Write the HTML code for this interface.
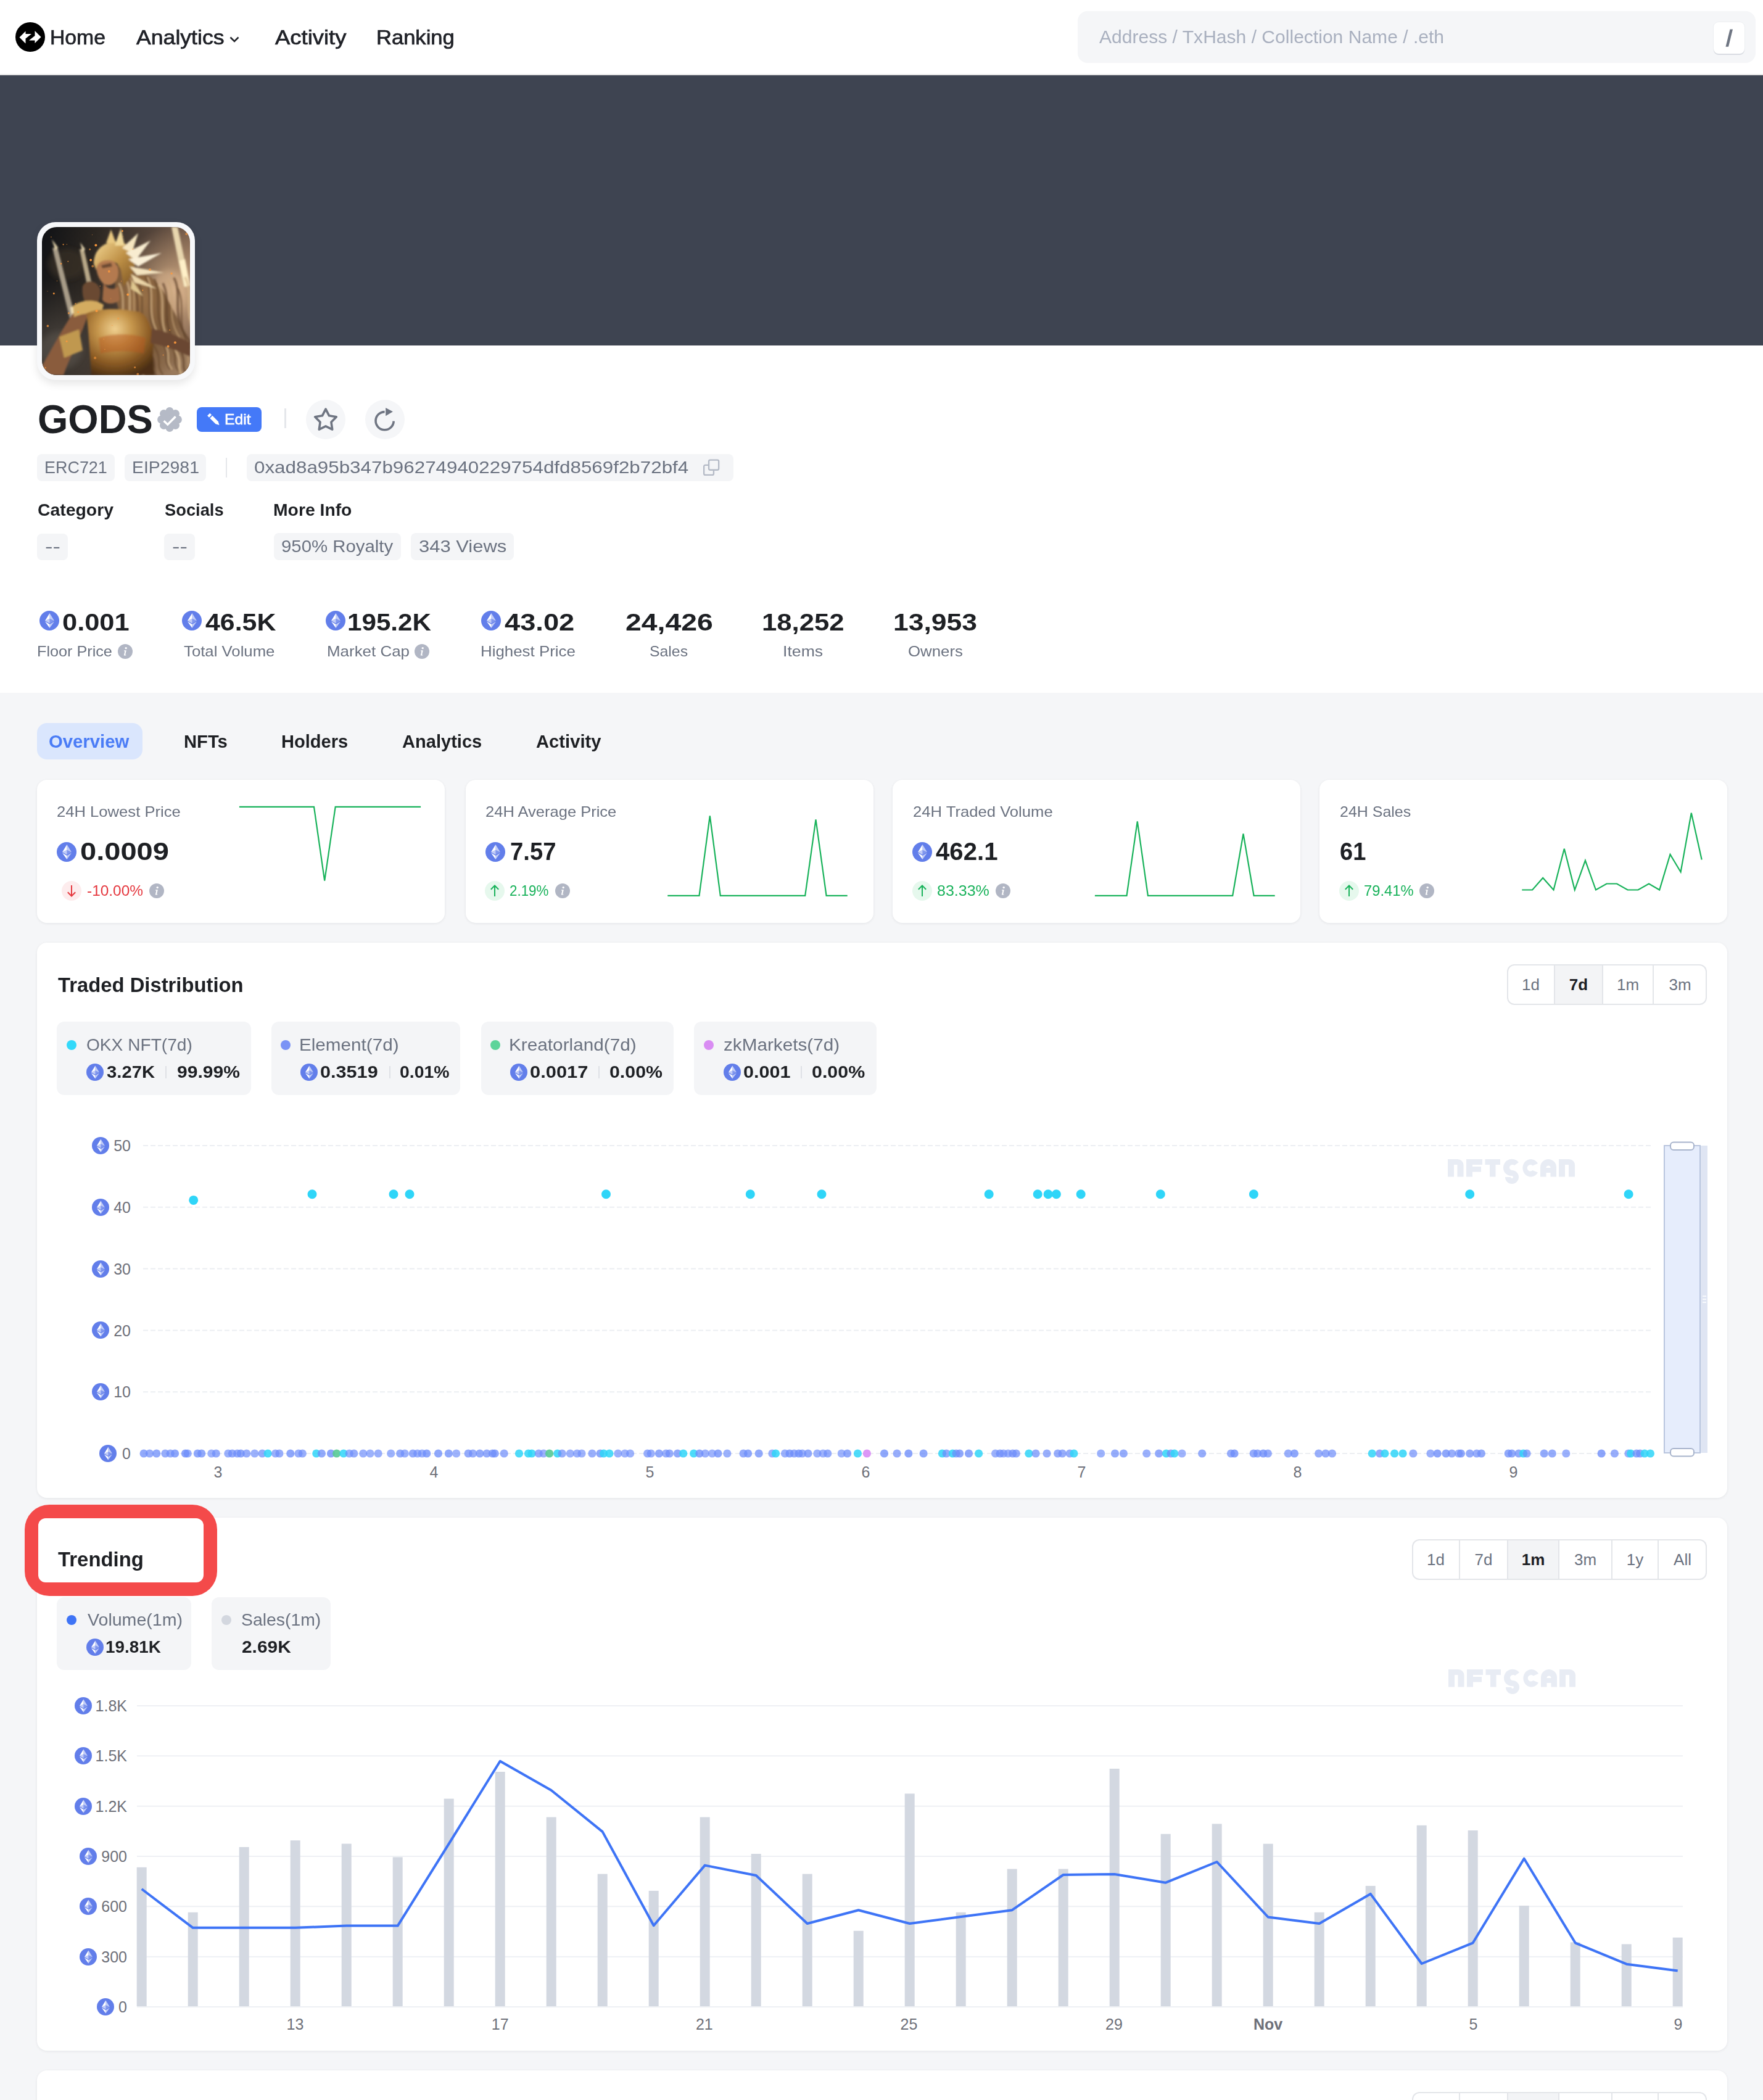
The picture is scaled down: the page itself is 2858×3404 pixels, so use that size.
<!DOCTYPE html>
<html><head><meta charset="utf-8">
<style>
html,body{margin:0;padding:0;}
body{width:2858px;height:3404px;overflow:hidden;background:#f5f6f8;position:relative;font-family:"Liberation Sans", sans-serif;}
.t{position:absolute;white-space:nowrap;}
.b{position:absolute;}
</style></head><body>
<svg width="0" height="0" style="position:absolute">
<defs>
<symbol id="eth" viewBox="0 0 32 32">
<circle cx="16" cy="16" r="16" fill="#627eea"/>
<g fill="#fff"><path fill-opacity=".602" d="M16.498 4v8.87l7.497 3.35z"/><path d="M16.498 4L9 16.22l7.498-3.35z"/><path fill-opacity=".602" d="M16.498 21.968v6.027L24 17.616z"/><path d="M16.498 27.995v-6.028L9 17.616z"/><path fill-opacity=".2" d="M16.498 20.573l7.497-4.353-7.497-3.348z"/><path fill-opacity=".602" d="M9 16.22l7.498 4.353v-7.701z"/></g>
</symbol>
<symbol id="info" viewBox="0 0 24 24">
<circle cx="12" cy="12" r="12" fill="#b1b6c4"/>
<circle cx="13.2" cy="6.6" r="1.7" fill="#fff"/>
<path d="M10.2 10.2h3.6l-1.7 7.2h1.4l-.3 1.2h-3.4l1.6-7.2h-1.4z" fill="#fff"/>
</symbol>
<symbol id="wm" overflow="visible"><g fill="#e8ecf4" fill-rule="evenodd">
<path d="M0 28.5V0H16A9.5 9.5 0 0 1 25.5 9.5V28.5H15.5V9H10V28.5Z"/>
<path d="M30 0H56V9H40V12H54V20.5H40V28.5H30Z"/>
<path d="M60.5 0H85V9H77.5V28.5H68V9H60.5Z"/>
<path d="M90 14a14 14 0 0 1 25 -9l-7 5a5 5 0 0 0 -8 3a5 5 0 0 0 4 5a11 11 0 0 1 11 11a11 11 0 0 1 -22 0h9a2 2 0 0 0 4 0a2 2 0 0 0 -2 -2a13 13 0 0 1 -14 -13z"/>
<path d="M146 7A13.25 14.25 0 1 0 146 21.5L137.5 18A5.2 5.2 0 1 1 137.5 10.5Z"/>
<path d="M150 28.5V13A13 13 0 0 1 176 13V28.5H166.5V22H159.5V28.5ZM159.5 14H166.5A3.5 3.5 0 0 0 159.5 14Z"/>
<path d="M180 28.5V0H196.5A9.5 9.5 0 0 1 206 9.5V28.5H196V9H190V28.5Z"/>
</g></symbol></defs></svg>

<div class="b" style="left:0.0px;top:0.0px;width:2858.0px;height:120.0px;background:#fff;border-radius:0px;"></div>
<div class="b" style="left:0.0px;top:120.0px;width:2858.0px;height:2.0px;background:#e4e4e4;border-radius:0px;"></div>
<svg class="b" style="left:25.0px;top:36.0px;" width="48" height="48" viewBox="0 0 48 48"><circle cx="24" cy="24" r="24" fill="#000"/><path fill="#fff" d="M6.5 24.5 L16.5 14.5 L16.5 19 L26 19 L16.5 26.5 L16.5 34.5 Z"/><path fill="#fff" d="M41.5 24 L31.5 34 L31.5 29.5 L22 29.5 L31.5 22 L31.5 14 Z"/></svg>
<div class="t" id="t0" style="left:81.3px;top:43.9px;font-size:33px;line-height:33px;font-weight:400;color:#202228;transform:scaleX(1.0221);transform-origin:0 0;-webkit-text-stroke:0.7px #202228;">Home</div>
<div class="t" id="t1" style="left:221.0px;top:43.9px;font-size:33px;line-height:33px;font-weight:400;color:#202228;transform:scaleX(1.0795);transform-origin:0 0;-webkit-text-stroke:0.7px #202228;">Analytics</div>
<svg class="b" style="left:371.0px;top:57.5px;" width="18" height="12" viewBox="0 0 18 12"><path d="M2.5 2.5 L9 9 L15.5 2.5" fill="none" stroke="#202228" stroke-width="2.6"/></svg>
<div class="t" id="t2" style="left:446.1px;top:43.9px;font-size:33px;line-height:33px;font-weight:400;color:#202228;transform:scaleX(1.1038);transform-origin:0 0;-webkit-text-stroke:0.7px #202228;">Activity</div>
<div class="t" id="t3" style="left:609.9px;top:43.9px;font-size:33px;line-height:33px;font-weight:400;color:#202228;transform:scaleX(1.0466);transform-origin:0 0;-webkit-text-stroke:0.7px #202228;">Ranking</div>
<div class="b" style="left:1747.0px;top:18.0px;width:1099.0px;height:84.0px;background:#f5f6f8;border-radius:16px;"></div>
<div class="t" id="t4" style="left:1782.0px;top:45.1px;font-size:30px;line-height:30px;font-weight:400;color:#a9b0bf;transform:scaleX(1.0018);transform-origin:0 0;">Address / TxHash / Collection Name / .eth</div>
<div class="b" style="left:2778.0px;top:36.0px;width:50.0px;height:51.0px;background:#fff;border-radius:8px;box-shadow:0 2px 0 #d9dce2, 0 0 0 1px #eceef1;"></div>
<svg class="b" style="left:2790.0px;top:40.0px;" width="30" height="40" viewBox="0 0 30 40"><path d="M7.5 35.7 L12 35.7 L19 7.5 L14.5 7.5 Z" fill="#6f7683"/></svg>
<div class="b" style="left:0.0px;top:122.0px;width:2858.0px;height:438.0px;background:#3e4451;border-radius:0px;"></div>
<div class="b" style="left:560.0px;top:560.0px;width:2298.0px;height:563.0px;background:#fff;border-radius:0px;"></div>
<div class="b" style="left:0.0px;top:560.0px;width:2858.0px;height:563.0px;background:#fff;border-radius:0px;"></div>
<div class="b" style="left:60.0px;top:360.0px;width:256.0px;height:256.0px;background:#f7f8fa;border-radius:30px;box-shadow:0 6px 14px rgba(0,0,0,0.10);"></div>
<svg class="b" style="left:68.0px;top:368.0px;" width="240" height="240" viewBox="0 0 240 240"><defs>
<linearGradient id="avbg" x1="0" y1="0" x2="1" y2="0.25"><stop offset="0" stop-color="#0f1115"/><stop offset="0.35" stop-color="#2b2621"/><stop offset="0.7" stop-color="#54443a"/><stop offset="1" stop-color="#806450"/></linearGradient>
<radialGradient id="avglow" cx="0.9" cy="0.42" r="0.42"><stop offset="0" stop-color="#f0c89a" stop-opacity="0.7"/><stop offset="1" stop-color="#e7b88a" stop-opacity="0"/></radialGradient>
<radialGradient id="avsmoke" cx="0.12" cy="0.8" r="0.45"><stop offset="0" stop-color="#4e4842" stop-opacity="0.95"/><stop offset="1" stop-color="#3a3530" stop-opacity="0"/></radialGradient>
<radialGradient id="hair" cx="0.35" cy="0.3" r="0.8"><stop offset="0" stop-color="#9a7248"/><stop offset="0.5" stop-color="#7a5838"/><stop offset="0.85" stop-color="#8a6a4c"/><stop offset="1" stop-color="#9a7a5c"/></radialGradient>
<linearGradient id="gold" x1="0" y1="0" x2="1" y2="1"><stop offset="0" stop-color="#f4d894"/><stop offset="0.5" stop-color="#c09248"/><stop offset="1" stop-color="#7a5220"/></linearGradient>
<radialGradient id="armor" cx="0.42" cy="0.3" r="0.75"><stop offset="0" stop-color="#f0d090"/><stop offset="0.35" stop-color="#c4944a"/><stop offset="0.7" stop-color="#8a5a24"/><stop offset="1" stop-color="#4b2f12"/></radialGradient>
<filter id="avblur" x="-10%" y="-10%" width="120%" height="120%"><feGaussianBlur stdDeviation="1.4"/></filter>
<filter id="avblur2" x="-20%" y="-20%" width="140%" height="140%"><feGaussianBlur stdDeviation="4"/></filter>
<clipPath id="avclip"><rect x="0" y="0" width="240" height="240" rx="24"/></clipPath>
</defs>
<g clip-path="url(#avclip)">
<rect width="240" height="240" fill="url(#avbg)"/>
<rect width="240" height="240" fill="url(#avglow)"/>
<rect width="240" height="240" fill="url(#avsmoke)"/>
<g filter="url(#avblur2)">
<ellipse cx="40" cy="60" rx="30" ry="25" fill="#3a3028" fill-opacity="0.6"/>
<ellipse cx="205" cy="110" rx="30" ry="40" fill="#e8c098" fill-opacity="0.35"/>
<ellipse cx="30" cy="200" rx="35" ry="30" fill="#57504a" fill-opacity="0.6"/>
</g>
<g filter="url(#avblur)">
<path d="M17 34 L25 33 L60 170 L51 172 Z" fill="#a89c88"/>
<path d="M46 130 L54 128 L62 168 L53 170 Z" fill="#f2e2b8"/>
<path d="M16 20 L22 38 L26 33 Z" fill="#e0d0a8"/>
<path d="M61 36 L68 35 L86 115 L78 117 Z" fill="#b8a888"/>
<path d="M62 25 L66 40 L70 36 Z" fill="#e8d8b0"/>
<path d="M210 0 L220 0 L240 95 L230 97 Z" fill="#e8d6ae"/>
<path d="M222 55 L232 52 L240 95 L232 97 Z" fill="#fff0c8"/>
<path d="M120 62 C150 60 185 80 200 110 C215 140 232 170 240 190 L240 240 L185 240 C175 215 160 200 150 180 C135 160 125 140 118 110 Z" fill="url(#hair)"/>
<path d="M125 91 C140 121 120 151 145 186 S150 221 165 241" fill="none" stroke="#d8b88a" stroke-width="2.9" stroke-opacity="0.7"/><path d="M136 84 C151 114 131 144 156 179 S161 214 176 234" fill="none" stroke="#d8b88a" stroke-width="3.3" stroke-opacity="0.7"/><path d="M143 82 C158 112 138 142 163 177 S168 212 183 232" fill="none" stroke="#c8a478" stroke-width="2.3" stroke-opacity="0.7"/><path d="M149 98 C164 128 144 158 169 193 S174 228 189 248" fill="none" stroke="#5e4028" stroke-width="3.2" stroke-opacity="0.7"/><path d="M156 89 C171 119 151 149 176 184 S181 219 196 239" fill="none" stroke="#6a4a2e" stroke-width="3.2" stroke-opacity="0.7"/><path d="M168 81 C183 111 163 141 188 176 S193 211 208 231" fill="none" stroke="#5e4028" stroke-width="2.4" stroke-opacity="0.7"/><path d="M171 81 C186 111 166 141 191 176 S196 211 211 231" fill="none" stroke="#d8b88a" stroke-width="2.7" stroke-opacity="0.7"/><path d="M182 84 C197 114 177 144 202 179 S207 214 222 234" fill="none" stroke="#6a4a2e" stroke-width="3.3" stroke-opacity="0.7"/><path d="M189 93 C204 123 184 153 209 188 S214 223 229 243" fill="none" stroke="#d8b88a" stroke-width="3.3" stroke-opacity="0.7"/><path d="M196 91 C211 121 191 151 216 186 S221 221 236 241" fill="none" stroke="#5e4028" stroke-width="3.4" stroke-opacity="0.7"/><path d="M204 85 C219 115 199 145 224 180 S229 215 244 235" fill="none" stroke="#c8a478" stroke-width="2.1" stroke-opacity="0.7"/><path d="M214 82 C229 112 209 142 234 177 S239 212 254 232" fill="none" stroke="#5e4028" stroke-width="3.7" stroke-opacity="0.7"/><path d="M220 99 C235 129 215 159 240 194 S245 229 260 249" fill="none" stroke="#5e4028" stroke-width="2.4" stroke-opacity="0.7"/><path d="M232 81 C247 111 227 141 252 176 S257 211 272 231" fill="none" stroke="#d8b88a" stroke-width="4.0" stroke-opacity="0.7"/><path d="M66 96 C72 84 88 86 94 100 C96 115 90 128 80 132 C70 128 64 112 66 96 Z" fill="#6a4a30"/>
<path d="M0 240 L0 225 C15 200 30 170 50 140 L75 140 C65 175 45 210 35 240 Z" fill="#8a5c3c"/>
<path d="M28 178 L60 166 L66 200 L36 212 Z" fill="#c09850"/>
<path d="M50 128 C62 118 86 116 100 126 L96 142 C80 138 64 140 52 146 Z" fill="#d4ac60"/>
<path d="M72 140 C95 130 130 132 160 138 C178 150 182 180 180 210 L182 240 L80 240 C78 210 76 170 72 140 Z" fill="url(#armor)"/>
<path d="M92 180 C110 172 150 172 168 180 L165 205 C145 200 115 200 95 205 Z" fill="#b8561e" fill-opacity="0.45"/>
<path d="M178 165 C200 168 225 178 240 188 L240 210 C220 200 198 192 176 188 Z" fill="#6a4630"/>
<path d="M100 90 C104 100 116 104 124 96 L126 118 C118 126 104 126 98 118 Z" fill="#a06a44"/>
<path d="M88 52 C86 66 90 84 100 92 C110 98 120 92 123 80 C126 66 120 56 110 50 Z" fill="#b47a50"/><path d="M96 62 L112 58 L114 64 L98 67 Z" fill="#6a4830"/>
<path d="M84 60 C84 34 104 22 126 24 C146 28 154 44 150 66 C146 80 138 90 132 96 L128 70 C124 56 110 50 96 56 C90 60 88 64 88 70 Z" fill="url(#gold)"/>
<path d="M104 26 L112 4 L120 26 Z" fill="#e8c880"/>
<path d="M118 30 L128 2 L134 30 Z" fill="#f0d898"/>
<path d="M130 34 L156 10 L146 42 Z" fill="#f6e6c0"/>
<path d="M136 42 L176 22 L152 54 Z" fill="#f8ecd0"/>
<path d="M140 52 L194 42 L156 64 Z" fill="#faf0d8"/>
<path d="M142 64 L198 74 L154 78 Z" fill="#f4e4c0"/>
<path d="M144 76 L186 100 L150 90 Z" fill="#ecd6a8"/>
<path d="M146 86 L164 112 L144 100 Z" fill="#e0c890"/>
</g>
<circle cx="77.7" cy="36.2" r="1.6" fill="#ff9a3c" fill-opacity="0.53"/><circle cx="128.6" cy="87.8" r="0.7" fill="#ff9a3c" fill-opacity="0.73"/><circle cx="9.0" cy="104.1" r="0.7" fill="#ff9a3c" fill-opacity="0.54"/><circle cx="101.9" cy="198.4" r="0.8" fill="#ff9a3c" fill-opacity="0.60"/><circle cx="150.6" cy="227.5" r="1.5" fill="#ff9a3c" fill-opacity="0.68"/><circle cx="234.3" cy="11.2" r="2.0" fill="#ff9a3c" fill-opacity="0.63"/><circle cx="34.6" cy="28.3" r="1.1" fill="#ff9a3c" fill-opacity="0.87"/><circle cx="43.4" cy="139.6" r="1.6" fill="#ff9a3c" fill-opacity="0.67"/><circle cx="131.5" cy="15.1" r="0.7" fill="#ff9a3c" fill-opacity="0.59"/><circle cx="163.3" cy="102.6" r="1.1" fill="#ff9a3c" fill-opacity="0.76"/><circle cx="108.8" cy="71.9" r="1.9" fill="#ff9a3c" fill-opacity="0.81"/><circle cx="58.6" cy="137.9" r="1.4" fill="#ff9a3c" fill-opacity="0.89"/><circle cx="175.1" cy="69.1" r="2.2" fill="#ff9a3c" fill-opacity="0.55"/><circle cx="100.3" cy="181.7" r="0.8" fill="#ff9a3c" fill-opacity="0.72"/><circle cx="9.4" cy="160.4" r="1.8" fill="#ff9a3c" fill-opacity="0.76"/><circle cx="210.1" cy="75.3" r="1.7" fill="#ff9a3c" fill-opacity="0.77"/><circle cx="139.2" cy="109.5" r="1.9" fill="#ff9a3c" fill-opacity="0.93"/><circle cx="113.8" cy="159.4" r="0.7" fill="#ff9a3c" fill-opacity="0.82"/><circle cx="155.3" cy="238.3" r="1.9" fill="#ff9a3c" fill-opacity="0.63"/><circle cx="92.6" cy="160.5" r="0.6" fill="#ff9a3c" fill-opacity="0.71"/><circle cx="40.3" cy="28.1" r="0.7" fill="#ff9a3c" fill-opacity="0.85"/><circle cx="31.0" cy="59.4" r="1.2" fill="#ff9a3c" fill-opacity="0.89"/><circle cx="19.3" cy="107.8" r="1.5" fill="#ff9a3c" fill-opacity="0.90"/><circle cx="196.6" cy="207.4" r="1.0" fill="#ff9a3c" fill-opacity="0.69"/><circle cx="86.1" cy="212.2" r="2.1" fill="#ff9a3c" fill-opacity="0.57"/><circle cx="42.3" cy="55.7" r="1.0" fill="#ff9a3c" fill-opacity="0.72"/><circle cx="141.4" cy="63.1" r="0.6" fill="#ff9a3c" fill-opacity="0.69"/><circle cx="88.6" cy="135.9" r="2.1" fill="#ff9a3c" fill-opacity="0.81"/><circle cx="123.7" cy="148.2" r="1.7" fill="#ff9a3c" fill-opacity="0.52"/><circle cx="215.9" cy="187.2" r="2.0" fill="#ff9a3c" fill-opacity="0.86"/><circle cx="94.2" cy="95.8" r="0.8" fill="#ff9a3c" fill-opacity="0.79"/><circle cx="14.9" cy="16.2" r="0.9" fill="#ff9a3c" fill-opacity="0.57"/><circle cx="81.6" cy="12.6" r="0.6" fill="#ff9a3c" fill-opacity="0.57"/><circle cx="24.4" cy="87.3" r="0.6" fill="#ff9a3c" fill-opacity="0.89"/><circle cx="147.4" cy="35.7" r="1.0" fill="#ff9a3c" fill-opacity="0.66"/><circle cx="87.4" cy="29.5" r="2.0" fill="#ff9a3c" fill-opacity="0.95"/><circle cx="111.8" cy="116.1" r="0.7" fill="#ff9a3c" fill-opacity="0.55"/><circle cx="82.2" cy="63.5" r="1.9" fill="#ff9a3c" fill-opacity="0.57"/><circle cx="5.5" cy="228.2" r="1.4" fill="#ff9a3c" fill-opacity="0.57"/><circle cx="130.4" cy="6.5" r="1.4" fill="#ff9a3c" fill-opacity="0.94"/><circle cx="207.2" cy="167.1" r="1.0" fill="#ff9a3c" fill-opacity="0.67"/><circle cx="40.1" cy="185.3" r="1.5" fill="#ff9a3c" fill-opacity="0.85"/><circle cx="79.1" cy="53.5" r="1.9" fill="#ff9a3c" fill-opacity="0.94"/><circle cx="204.6" cy="193.5" r="1.9" fill="#ff9a3c" fill-opacity="0.83"/><circle cx="54.4" cy="124.2" r="1.2" fill="#ff9a3c" fill-opacity="0.51"/>
</g></svg>
<div class="t" id="t5" style="left:60.7px;top:647.8px;font-size:64px;line-height:64px;font-weight:700;color:#1e2024;transform:scaleX(0.9908);transform-origin:0 0;">GODS</div>
<svg class="b" style="left:255.0px;top:660.0px;" width="40" height="40" viewBox="0 0 40 40"><circle cx="20" cy="20" r="14.5" fill="#b5bac6"/><circle cx="33.30" cy="20.00" r="6.6" fill="#b5bac6"/><circle cx="29.40" cy="29.40" r="6.6" fill="#b5bac6"/><circle cx="20.00" cy="33.30" r="6.6" fill="#b5bac6"/><circle cx="10.60" cy="29.40" r="6.6" fill="#b5bac6"/><circle cx="6.70" cy="20.00" r="6.6" fill="#b5bac6"/><circle cx="10.60" cy="10.60" r="6.6" fill="#b5bac6"/><circle cx="20.00" cy="6.70" r="6.6" fill="#b5bac6"/><circle cx="29.40" cy="10.60" r="6.6" fill="#b5bac6"/><path d="M10.6 22.3 L16.8 28.2 L29.6 15.2" fill="none" stroke="#fff" stroke-width="3.4"/></svg>
<div class="b" style="left:319.0px;top:660.0px;width:105.0px;height:40.0px;background:#4479f8;border-radius:8px;"></div>
<svg class="b" style="left:330.0px;top:666.0px;" width="30" height="30" viewBox="0 0 30 30"><g transform="translate(8.2,5.8) rotate(45)"><rect x="0" y="-2.9" width="4" height="5.8" fill="#fff"/><path d="M5.8 -2.9 H19 L24.5 0 L19 2.9 H5.8 Z" fill="#fff"/></g></svg>
<div class="t" id="t6" style="left:363.9px;top:667.6px;font-size:24.5px;line-height:24.5px;font-weight:400;color:#fff;transform:scaleX(1.0071);transform-origin:0 0;-webkit-text-stroke:0.6px #fff;">Edit</div>
<div class="b" style="left:460.5px;top:662.0px;width:3.0px;height:32.0px;background:#e5e7eb;border-radius:0px;"></div>
<div class="b" style="left:496.0px;top:648.0px;width:64.0px;height:64.0px;background:#f5f6f8;border-radius:32px;"></div>
<svg class="b" style="left:496.0px;top:648.0px;" width="64" height="64" viewBox="0 0 64 64"><path d="M32.00 15.20 L37.53 25.80 L49.31 27.78 L40.94 36.30 L42.70 48.12 L32.00 42.80 L21.30 48.12 L23.06 36.30 L14.69 27.78 L26.47 25.80 Z" fill="none" stroke="#6f7582" stroke-width="3.6" stroke-linejoin="round"/></svg>
<div class="b" style="left:592.0px;top:648.0px;width:64.0px;height:64.0px;background:#f5f6f8;border-radius:32px;"></div>
<svg class="b" style="left:592.0px;top:648.0px;" width="64" height="64" viewBox="0 0 64 64"><path d="M31.6 19.6 A14.6 14.6 0 1 0 46.2 34.6" fill="none" stroke="#6f7582" stroke-width="3.6"/><path d="M33.2 12.9 L33.2 26.2 L44.9 19.3 Z" fill="#6f7582"/></svg>
<div class="b" style="left:60.0px;top:736.0px;width:126.0px;height:44.0px;background:#f4f5f7;border-radius:8px;"></div>
<div class="t" id="t7" style="left:72.0px;top:744.3px;font-size:28px;line-height:28px;font-weight:400;color:#6b7280;transform:scaleX(0.9621);transform-origin:0 0;">ERC721</div>
<div class="b" style="left:202.0px;top:736.0px;width:132.0px;height:44.0px;background:#f4f5f7;border-radius:8px;"></div>
<div class="t" id="t8" style="left:213.6px;top:744.3px;font-size:28px;line-height:28px;font-weight:400;color:#6b7280;transform:scaleX(1.0144);transform-origin:0 0;">EIP2981</div>
<div class="b" style="left:366.0px;top:742.0px;width:2.0px;height:32.0px;background:#e5e7eb;border-radius:0px;"></div>
<div class="b" style="left:400.0px;top:736.0px;width:789.0px;height:44.0px;background:#f4f5f7;border-radius:8px;"></div>
<div class="t" id="t9" style="left:411.9px;top:744.3px;font-size:28px;line-height:28px;font-weight:400;color:#6b7280;transform:scaleX(1.1194);transform-origin:0 0;">0xad8a95b347b96274940229754dfd8569f2b72bf4</div>
<svg class="b" style="left:1138.0px;top:742.0px;" width="32" height="32" viewBox="0 0 32 32"><rect x="11.05" y="3.65" width="16.1" height="16.1" rx="2.2" fill="none" stroke="#b4bac6" stroke-width="2.3"/><path d="M11.05 11.85 H5.35 A2.2 2.2 0 0 0 3.15 14.05 V25.65 A2.2 2.2 0 0 0 5.35 27.85 H16.75 A2.2 2.2 0 0 0 18.95 25.65 V19.75" fill="none" stroke="#b4bac6" stroke-width="2.3"/></svg>
<div class="t" id="t10" style="left:61.3px;top:812.8px;font-size:28px;line-height:28px;font-weight:700;color:#1e2024;transform:scaleX(1.0139);transform-origin:0 0;">Category</div>
<div class="t" id="t11" style="left:267.4px;top:812.8px;font-size:28px;line-height:28px;font-weight:700;color:#1e2024;transform:scaleX(0.9755);transform-origin:0 0;">Socials</div>
<div class="t" id="t12" style="left:443.2px;top:812.8px;font-size:28px;line-height:28px;font-weight:700;color:#1e2024;transform:scaleX(1.0112);transform-origin:0 0;">More Info</div>
<div class="b" style="left:60.0px;top:864.5px;width:50.0px;height:43.0px;background:#f4f5f7;border-radius:8px;"></div>
<div class="t" id="t13" style="left:72.5px;top:872.3px;font-size:28px;line-height:28px;font-weight:400;color:#6b7280;transform:scaleX(1.3353);transform-origin:0 0;">--</div>
<div class="b" style="left:266.0px;top:864.5px;width:50.0px;height:43.0px;background:#f4f5f7;border-radius:8px;"></div>
<div class="t" id="t14" style="left:278.5px;top:872.3px;font-size:28px;line-height:28px;font-weight:400;color:#6b7280;transform:scaleX(1.3353);transform-origin:0 0;">--</div>
<div class="b" style="left:444.0px;top:864.0px;width:206.0px;height:43.5px;background:#f4f5f7;border-radius:8px;"></div>
<div class="t" id="t15" style="left:455.6px;top:872.3px;font-size:28px;line-height:28px;font-weight:400;color:#6b7280;transform:scaleX(1.0488);transform-origin:0 0;">950% Royalty</div>
<div class="b" style="left:666.0px;top:864.0px;width:166.5px;height:43.5px;background:#f4f5f7;border-radius:8px;"></div>
<div class="t" id="t16" style="left:678.9px;top:872.3px;font-size:28px;line-height:28px;font-weight:400;color:#6b7280;transform:scaleX(1.1055);transform-origin:0 0;">343 Views</div>
<svg class="b" style="left:64.0px;top:990.0px;" width="32" height="32" viewBox="0 0 32 32"><use href="#eth"/></svg>
<div class="t" id="t17" style="left:101.0px;top:988.5px;font-size:39px;line-height:39px;font-weight:700;color:#1e2024;transform:scaleX(1.1134);transform-origin:0 0;">0.001</div>
<div class="t" id="t18" style="left:59.9px;top:1043.7px;font-size:24px;line-height:24px;font-weight:400;color:#6b7280;transform:scaleX(1.0504);transform-origin:0 0;">Floor Price</div>
<svg class="b" style="left:191.0px;top:1044.0px;" width="24" height="24" viewBox="0 0 24 24"><use href="#info"/></svg>
<svg class="b" style="left:295.0px;top:990.0px;" width="32" height="32" viewBox="0 0 32 32"><use href="#eth"/></svg>
<div class="t" id="t19" style="left:332.7px;top:988.5px;font-size:39px;line-height:39px;font-weight:700;color:#1e2024;transform:scaleX(1.0990);transform-origin:0 0;">46.5K</div>
<div class="t" id="t20" style="left:298.0px;top:1043.7px;font-size:24px;line-height:24px;font-weight:400;color:#6b7280;transform:scaleX(1.0730);transform-origin:0 0;">Total Volume</div>
<svg class="b" style="left:527.5px;top:990.0px;" width="32" height="32" viewBox="0 0 32 32"><use href="#eth"/></svg>
<div class="t" id="t21" style="left:562.8px;top:988.5px;font-size:39px;line-height:39px;font-weight:700;color:#1e2024;transform:scaleX(1.0806);transform-origin:0 0;">195.2K</div>
<div class="t" id="t22" style="left:530.0px;top:1043.7px;font-size:24px;line-height:24px;font-weight:400;color:#6b7280;transform:scaleX(1.0803);transform-origin:0 0;">Market Cap</div>
<svg class="b" style="left:672.0px;top:1044.0px;" width="24" height="24" viewBox="0 0 24 24"><use href="#info"/></svg>
<svg class="b" style="left:780.0px;top:990.0px;" width="32" height="32" viewBox="0 0 32 32"><use href="#eth"/></svg>
<div class="t" id="t23" style="left:818.0px;top:988.5px;font-size:39px;line-height:39px;font-weight:700;color:#1e2024;transform:scaleX(1.1608);transform-origin:0 0;">43.02</div>
<div class="t" id="t24" style="left:778.9px;top:1043.7px;font-size:24px;line-height:24px;font-weight:400;color:#6b7280;transform:scaleX(1.0780);transform-origin:0 0;">Highest Price</div>
<div class="t" id="t25" style="left:1013.8px;top:988.5px;font-size:39px;line-height:39px;font-weight:700;color:#1e2024;transform:scaleX(1.1880);transform-origin:0 0;">24,426</div>
<div class="t" id="t26" style="left:1053.0px;top:1043.7px;font-size:24px;line-height:24px;font-weight:400;color:#6b7280;transform:scaleX(1.0339);transform-origin:0 0;">Sales</div>
<div class="t" id="t27" style="left:1234.8px;top:988.5px;font-size:39px;line-height:39px;font-weight:700;color:#1e2024;transform:scaleX(1.1197);transform-origin:0 0;">18,252</div>
<div class="t" id="t28" style="left:1268.6px;top:1043.7px;font-size:24px;line-height:24px;font-weight:400;color:#6b7280;transform:scaleX(1.1107);transform-origin:0 0;">Items</div>
<div class="t" id="t29" style="left:1447.7px;top:988.5px;font-size:39px;line-height:39px;font-weight:700;color:#1e2024;transform:scaleX(1.1410);transform-origin:0 0;">13,953</div>
<div class="t" id="t30" style="left:1471.8px;top:1043.7px;font-size:24px;line-height:24px;font-weight:400;color:#6b7280;transform:scaleX(1.0756);transform-origin:0 0;">Owners</div>
<div class="b" style="left:60.0px;top:1172.0px;width:170.5px;height:59.0px;background:#dae6fd;border-radius:16px;"></div>
<div class="t" id="t31" style="left:79.4px;top:1187.9px;font-size:29px;line-height:29px;font-weight:700;color:#4a7cf6;transform:scaleX(1.0102);transform-origin:0 0;">Overview</div>
<div class="t" id="t32" style="left:298.0px;top:1187.9px;font-size:29px;line-height:29px;font-weight:700;color:#1e2024;transform:scaleX(1.0074);transform-origin:0 0;">NFTs</div>
<div class="t" id="t33" style="left:455.8px;top:1187.9px;font-size:29px;line-height:29px;font-weight:700;color:#1e2024;transform:scaleX(1.0019);transform-origin:0 0;">Holders</div>
<div class="t" id="t34" style="left:651.9px;top:1187.9px;font-size:29px;line-height:29px;font-weight:700;color:#1e2024;transform:scaleX(1.0023);transform-origin:0 0;">Analytics</div>
<div class="t" id="t35" style="left:869.0px;top:1187.9px;font-size:29px;line-height:29px;font-weight:700;color:#1e2024;transform:scaleX(1.0067);transform-origin:0 0;">Activity</div>
<div class="b" style="left:60.0px;top:1264.0px;width:661.0px;height:232.0px;background:#fff;border-radius:16px;box-shadow:0 1px 4px rgba(16,24,40,0.08);"></div>
<div class="t" id="t36" style="left:92.3px;top:1303.5px;font-size:24px;line-height:24px;font-weight:400;color:#6b7280;transform:scaleX(1.0674);transform-origin:0 0;">24H Lowest Price</div>
<svg class="b" style="left:92.0px;top:1365.0px;" width="32" height="32" viewBox="0 0 32 32"><use href="#eth"/></svg>
<div class="t" id="t37" style="left:129.7px;top:1360.1px;font-size:40px;line-height:40px;font-weight:700;color:#1e2024;transform:scaleX(1.1760);transform-origin:0 0;">0.0009</div>
<svg class="b" style="left:100.0px;top:1428.0px;" width="32" height="32" viewBox="0 0 32 32"><circle cx="16" cy="16" r="16" fill="#fdeced"/><path d="M16 7v17.5M9.8 18.3l6.2 6.2 6.2-6.2" fill="none" stroke="#e5383f" stroke-width="2"/></svg>
<div class="t" id="t38" style="left:141.0px;top:1432.0px;font-size:24px;line-height:24px;font-weight:400;color:#e5383f;transform:scaleX(1.0180);transform-origin:0 0;">-10.00%</div>
<div class="b" style="left:755.0px;top:1264.0px;width:661.0px;height:232.0px;background:#fff;border-radius:16px;box-shadow:0 1px 4px rgba(16,24,40,0.08);"></div>
<div class="t" id="t39" style="left:786.6px;top:1303.5px;font-size:24px;line-height:24px;font-weight:400;color:#6b7280;transform:scaleX(1.0633);transform-origin:0 0;">24H Average Price</div>
<svg class="b" style="left:787.0px;top:1365.0px;" width="32" height="32" viewBox="0 0 32 32"><use href="#eth"/></svg>
<div class="t" id="t40" style="left:826.8px;top:1360.1px;font-size:40px;line-height:40px;font-weight:700;color:#1e2024;transform:scaleX(0.9568);transform-origin:0 0;">7.57</div>
<svg class="b" style="left:786.0px;top:1428.0px;" width="32" height="32" viewBox="0 0 32 32"><circle cx="16" cy="16" r="16" fill="#e6f8ed"/><path d="M16 25v-17.5M9.8 13.7l6.2-6.2 6.2 6.2" fill="none" stroke="#18b25a" stroke-width="2"/></svg>
<div class="t" id="t41" style="left:826.4px;top:1432.0px;font-size:24px;line-height:24px;font-weight:400;color:#18b25a;transform:scaleX(0.9309);transform-origin:0 0;">2.19%</div>
<div class="b" style="left:1447.0px;top:1264.0px;width:661.0px;height:232.0px;background:#fff;border-radius:16px;box-shadow:0 1px 4px rgba(16,24,40,0.08);"></div>
<div class="t" id="t42" style="left:1479.6px;top:1303.5px;font-size:24px;line-height:24px;font-weight:400;color:#6b7280;transform:scaleX(1.0687);transform-origin:0 0;">24H Traded Volume</div>
<svg class="b" style="left:1479.0px;top:1365.0px;" width="32" height="32" viewBox="0 0 32 32"><use href="#eth"/></svg>
<div class="t" id="t43" style="left:1516.6px;top:1360.1px;font-size:40px;line-height:40px;font-weight:700;color:#1e2024;transform:scaleX(1.0040);transform-origin:0 0;">462.1</div>
<svg class="b" style="left:1479.0px;top:1428.0px;" width="32" height="32" viewBox="0 0 32 32"><circle cx="16" cy="16" r="16" fill="#e6f8ed"/><path d="M16 25v-17.5M9.8 13.7l6.2-6.2 6.2 6.2" fill="none" stroke="#18b25a" stroke-width="2"/></svg>
<div class="t" id="t44" style="left:1519.4px;top:1432.0px;font-size:24px;line-height:24px;font-weight:400;color:#18b25a;transform:scaleX(1.0412);transform-origin:0 0;">83.33%</div>
<div class="b" style="left:2139.0px;top:1264.0px;width:661.0px;height:232.0px;background:#fff;border-radius:16px;box-shadow:0 1px 4px rgba(16,24,40,0.08);"></div>
<div class="t" id="t45" style="left:2172.0px;top:1303.5px;font-size:24px;line-height:24px;font-weight:400;color:#6b7280;transform:scaleX(1.0409);transform-origin:0 0;">24H Sales</div>
<div class="t" id="t46" style="left:2172.0px;top:1360.1px;font-size:40px;line-height:40px;font-weight:700;color:#1e2024;transform:scaleX(0.9512);transform-origin:0 0;">61</div>
<svg class="b" style="left:2171.0px;top:1428.0px;" width="32" height="32" viewBox="0 0 32 32"><circle cx="16" cy="16" r="16" fill="#e6f8ed"/><path d="M16 25v-17.5M9.8 13.7l6.2-6.2 6.2 6.2" fill="none" stroke="#18b25a" stroke-width="2"/></svg>
<div class="t" id="t47" style="left:2211.4px;top:1432.0px;font-size:24px;line-height:24px;font-weight:400;color:#18b25a;transform:scaleX(0.9888);transform-origin:0 0;">79.41%</div>
<svg class="b" style="left:0.0px;top:0.0px;pointer-events:none;" width="2858" height="1500" viewBox="0 0 2858 1500"><polyline fill="none" stroke="#18b25a" stroke-width="2.2" stroke-linejoin="miter" points="387.9,1307.9 509.0,1307.9 526.2,1427.6 543.7,1307.9 682.1,1307.9"/><polyline fill="none" stroke="#18b25a" stroke-width="2.2" stroke-linejoin="miter" points="1082.3,1451.8 1133.5,1451.8 1150.8,1322.4 1167.8,1451.8 1305.2,1451.8 1322.5,1328.3 1339.6,1451.8 1373.7,1451.8"/><polyline fill="none" stroke="#18b25a" stroke-width="2.2" stroke-linejoin="miter" points="1774.9,1451.8 1826.5,1451.8 1843.8,1331.3 1860.9,1451.8 1998.2,1451.8 2015.5,1351.5 2032.6,1451.8 2066.7,1451.8"/><polyline fill="none" stroke="#18b25a" stroke-width="2.2" stroke-linejoin="miter" points="2467.3,1442.5 2484.1,1442.5 2501.2,1423.0 2518.5,1442.5 2535.8,1375.8 2552.8,1442.5 2569.9,1394.8 2587.0,1442.5 2604.5,1432.5 2621.1,1432.5 2638.6,1442.5 2655.5,1442.5 2673.0,1432.5 2690.2,1442.5 2707.5,1384.9 2724.6,1413.5 2741.8,1317.8 2758.7,1393.6"/></svg>
<svg class="b" style="left:242.0px;top:1432.0px;" width="24" height="24" viewBox="0 0 24 24"><use href="#info"/></svg>
<svg class="b" style="left:900.0px;top:1432.0px;" width="24" height="24" viewBox="0 0 24 24"><use href="#info"/></svg>
<svg class="b" style="left:1614.0px;top:1432.0px;" width="24" height="24" viewBox="0 0 24 24"><use href="#info"/></svg>
<svg class="b" style="left:2301.0px;top:1432.0px;" width="24" height="24" viewBox="0 0 24 24"><use href="#info"/></svg>
<div class="b" style="left:60.0px;top:1528.0px;width:2740.0px;height:900.0px;background:#fff;border-radius:16px;box-shadow:0 1px 4px rgba(16,24,40,0.08);"></div>
<div class="t" id="t48" style="left:93.8px;top:1579.7px;font-size:33px;line-height:33px;font-weight:700;color:#1e2024;transform:scaleX(0.9937);transform-origin:0 0;">Traded Distribution</div>
<div class="b" style="left:2443.0px;top:1562.5px;width:324.0px;height:66.5px;background:#fff;border-radius:12px;box-shadow:inset 0 0 0 2px #e3e5e9;"></div>
<div class="t" style="left:2431.5px;width:100px;text-align:center;top:1583.2px;font-size:26px;line-height:26px;font-weight:400;color:#6b7280;">1d</div>
<div class="b" style="left:2521.0px;top:1564.5px;width:76.0px;height:62.5px;background:#f3f4f6;border-radius:0px;"></div>
<div class="t" style="left:2509.0px;width:100px;text-align:center;top:1583.2px;font-size:26px;line-height:26px;font-weight:700;color:#1e2024;">7d</div>
<div class="t" style="left:2589.0px;width:100px;text-align:center;top:1583.2px;font-size:26px;line-height:26px;font-weight:400;color:#6b7280;">1m</div>
<div class="t" style="left:2673.5px;width:100px;text-align:center;top:1583.2px;font-size:26px;line-height:26px;font-weight:400;color:#6b7280;">3m</div>
<div class="b" style="left:2519.0px;top:1563.5px;width:2.0px;height:64.5px;background:#e3e5e9;border-radius:0px;"></div>
<div class="b" style="left:2597.0px;top:1563.5px;width:2.0px;height:64.5px;background:#e3e5e9;border-radius:0px;"></div>
<div class="b" style="left:2679.0px;top:1563.5px;width:2.0px;height:64.5px;background:#e3e5e9;border-radius:0px;"></div>
<div class="b" style="left:92.4px;top:1656.2px;width:314.3px;height:119.3px;background:#f4f5f7;border-radius:12px;"></div>
<svg class="b" style="left:108.0px;top:1686.3px;" width="16" height="16" viewBox="0 0 16 16"><circle cx="8" cy="8" r="8" fill="#33d9fa"/></svg>
<div class="t" id="t49" style="left:140.1px;top:1680.1px;font-size:28px;line-height:28px;font-weight:400;color:#6b7280;transform:scaleX(1.0041);transform-origin:0 0;">OKX NFT(7d)</div>
<svg class="b" style="left:140.2px;top:1723.8px;" width="28" height="28" viewBox="0 0 32 32"><use href="#eth"/></svg>
<div class="b" style="left:439.5px;top:1656.2px;width:306.5px;height:119.3px;background:#f4f5f7;border-radius:12px;"></div>
<svg class="b" style="left:455.1px;top:1686.3px;" width="16" height="16" viewBox="0 0 16 16"><circle cx="8" cy="8" r="8" fill="#7b93f5"/></svg>
<div class="t" id="t50" style="left:485.3px;top:1680.1px;font-size:28px;line-height:28px;font-weight:400;color:#6b7280;transform:scaleX(1.0591);transform-origin:0 0;">Element(7d)</div>
<svg class="b" style="left:487.3px;top:1723.8px;" width="28" height="28" viewBox="0 0 32 32"><use href="#eth"/></svg>
<div class="b" style="left:779.5px;top:1656.2px;width:312.1px;height:119.3px;background:#f4f5f7;border-radius:12px;"></div>
<svg class="b" style="left:795.1px;top:1686.3px;" width="16" height="16" viewBox="0 0 16 16"><circle cx="8" cy="8" r="8" fill="#5dd49a"/></svg>
<div class="t" id="t51" style="left:825.1px;top:1680.1px;font-size:28px;line-height:28px;font-weight:400;color:#6b7280;transform:scaleX(1.0625);transform-origin:0 0;">Kreatorland(7d)</div>
<svg class="b" style="left:827.3px;top:1723.8px;" width="28" height="28" viewBox="0 0 32 32"><use href="#eth"/></svg>
<div class="b" style="left:1125.0px;top:1656.2px;width:295.5px;height:119.3px;background:#f4f5f7;border-radius:12px;"></div>
<svg class="b" style="left:1140.6px;top:1686.3px;" width="16" height="16" viewBox="0 0 16 16"><circle cx="8" cy="8" r="8" fill="#d98cf3"/></svg>
<div class="t" id="t52" style="left:1173.1px;top:1680.1px;font-size:28px;line-height:28px;font-weight:400;color:#6b7280;transform:scaleX(1.0602);transform-origin:0 0;">zkMarkets(7d)</div>
<svg class="b" style="left:1172.8px;top:1723.8px;" width="28" height="28" viewBox="0 0 32 32"><use href="#eth"/></svg>
<div class="t" id="t53" style="left:173.0px;top:1724.1px;font-size:28px;line-height:28px;font-weight:700;color:#1e2024;transform:scaleX(1.0440);transform-origin:0 0;">3.27K</div>
<div class="b" style="left:267.7px;top:1728.0px;width:2.0px;height:20.0px;background:#dfe1e6;border-radius:0px;"></div>
<div class="t" id="t54" style="left:286.8px;top:1724.1px;font-size:28px;line-height:28px;font-weight:700;color:#1e2024;transform:scaleX(1.0747);transform-origin:0 0;">99.99%</div>
<div class="t" id="t55" style="left:519.4px;top:1724.1px;font-size:28px;line-height:28px;font-weight:700;color:#1e2024;transform:scaleX(1.0941);transform-origin:0 0;">0.3519</div>
<div class="b" style="left:630.7px;top:1728.0px;width:2.0px;height:20.0px;background:#dfe1e6;border-radius:0px;"></div>
<div class="t" id="t56" style="left:648.4px;top:1724.1px;font-size:28px;line-height:28px;font-weight:700;color:#1e2024;transform:scaleX(1.0152);transform-origin:0 0;">0.01%</div>
<div class="t" id="t57" style="left:859.4px;top:1724.1px;font-size:28px;line-height:28px;font-weight:700;color:#1e2024;transform:scaleX(1.1024);transform-origin:0 0;">0.0017</div>
<div class="b" style="left:970.0px;top:1728.0px;width:2.0px;height:20.0px;background:#dfe1e6;border-radius:0px;"></div>
<div class="t" id="t58" style="left:987.7px;top:1724.1px;font-size:28px;line-height:28px;font-weight:700;color:#1e2024;transform:scaleX(1.0835);transform-origin:0 0;">0.00%</div>
<div class="t" id="t59" style="left:1205.0px;top:1724.1px;font-size:28px;line-height:28px;font-weight:700;color:#1e2024;transform:scaleX(1.0929);transform-origin:0 0;">0.001</div>
<div class="b" style="left:1298.0px;top:1728.0px;width:2.0px;height:20.0px;background:#dfe1e6;border-radius:0px;"></div>
<div class="t" id="t60" style="left:1316.3px;top:1724.1px;font-size:28px;line-height:28px;font-weight:700;color:#1e2024;transform:scaleX(1.0861);transform-origin:0 0;">0.00%</div>
<svg class="b" style="left:0.0px;top:0.0px;" width="2858" height="2440" viewBox="0 0 2858 2440"><line x1="232" y1="1857" x2="2676" y2="1857" stroke="#eceef2" stroke-width="2" stroke-dasharray="8 4"/><line x1="232" y1="1956.8" x2="2676" y2="1956.8" stroke="#eceef2" stroke-width="2" stroke-dasharray="8 4"/><line x1="232" y1="2056.6" x2="2676" y2="2056.6" stroke="#eceef2" stroke-width="2" stroke-dasharray="8 4"/><line x1="232" y1="2156.4" x2="2676" y2="2156.4" stroke="#eceef2" stroke-width="2" stroke-dasharray="8 4"/><line x1="232" y1="2256.2" x2="2676" y2="2256.2" stroke="#eceef2" stroke-width="2" stroke-dasharray="8 4"/><line x1="232" y1="2356" x2="2676" y2="2356" stroke="#eceef2" stroke-width="2" stroke-dasharray="8 4"/><use href="#wm" x="2347" y="1879"/><rect x="2756" y="1857" width="12" height="498" fill="#dfe5f3"/><rect x="2698" y="1857" width="58" height="498" fill="#e6edfc" stroke="#b9c5de" stroke-width="2"/><rect x="2708" y="1851.5" width="38" height="12.5" rx="5" fill="#fff" stroke="#a8b4cc" stroke-width="2"/><rect x="2708" y="2348" width="38" height="12.5" rx="5" fill="#fff" stroke="#a8b4cc" stroke-width="2"/><path d="M2760 2101h6M2760 2106h6M2760 2111h6" stroke="#fff" stroke-width="1.5"/><circle cx="313.7" cy="1945.4" r="7.5" fill="#2fd5f8"/><circle cx="506" cy="1935.8" r="7.5" fill="#2fd5f8"/><circle cx="638" cy="1935.8" r="7.5" fill="#2fd5f8"/><circle cx="664" cy="1935.8" r="7.5" fill="#2fd5f8"/><circle cx="982.5" cy="1935.8" r="7.5" fill="#2fd5f8"/><circle cx="1216.3" cy="1935.8" r="7.5" fill="#2fd5f8"/><circle cx="1332" cy="1935.8" r="7.5" fill="#2fd5f8"/><circle cx="1603.2" cy="1935.8" r="7.5" fill="#2fd5f8"/><circle cx="1682.2" cy="1935.8" r="7.5" fill="#2fd5f8"/><circle cx="1699.1" cy="1935.8" r="7.5" fill="#2fd5f8"/><circle cx="1712.4" cy="1935.8" r="7.5" fill="#2fd5f8"/><circle cx="1752.2" cy="1935.8" r="7.5" fill="#2fd5f8"/><circle cx="1881.3" cy="1935.8" r="7.5" fill="#2fd5f8"/><circle cx="2032.4" cy="1935.8" r="7.5" fill="#2fd5f8"/><circle cx="2382.7" cy="1935.8" r="7.5" fill="#2fd5f8"/><circle cx="2640.1" cy="1935.8" r="7.5" fill="#2fd5f8"/><circle cx="233.1" cy="2356" r="6.6" fill="#6c8cfa" fill-opacity="0.75"/><circle cx="242.5" cy="2356" r="6.6" fill="#6c8cfa" fill-opacity="0.71"/><circle cx="253.7" cy="2356" r="6.6" fill="#6c8cfa" fill-opacity="0.74"/><circle cx="267.9" cy="2356" r="6.6" fill="#6c8cfa" fill-opacity="0.71"/><circle cx="276.2" cy="2356" r="6.6" fill="#6c8cfa" fill-opacity="0.70"/><circle cx="283.6" cy="2356" r="6.6" fill="#6c8cfa" fill-opacity="0.77"/><circle cx="300.5" cy="2356" r="6.6" fill="#6c8cfa" fill-opacity="0.78"/><circle cx="304.2" cy="2356" r="6.6" fill="#6c8cfa" fill-opacity="0.68"/><circle cx="320.3" cy="2356" r="6.6" fill="#6c8cfa" fill-opacity="0.75"/><circle cx="326.7" cy="2356" r="6.6" fill="#6c8cfa" fill-opacity="0.75"/><circle cx="342.8" cy="2356" r="6.6" fill="#6c8cfa" fill-opacity="0.66"/><circle cx="350.3" cy="2356" r="6.6" fill="#6c8cfa" fill-opacity="0.72"/><circle cx="369.8" cy="2356" r="6.6" fill="#6c8cfa" fill-opacity="0.68"/><circle cx="376.5" cy="2356" r="6.6" fill="#6c8cfa" fill-opacity="0.72"/><circle cx="384.7" cy="2356" r="6.6" fill="#6c8cfa" fill-opacity="0.70"/><circle cx="390.3" cy="2356" r="6.6" fill="#6c8cfa" fill-opacity="0.76"/><circle cx="399.7" cy="2356" r="6.6" fill="#6c8cfa" fill-opacity="0.70"/><circle cx="412.8" cy="2356" r="6.6" fill="#6c8cfa" fill-opacity="0.68"/><circle cx="425.2" cy="2356" r="6.6" fill="#6c8cfa" fill-opacity="0.72"/><circle cx="434.2" cy="2356" r="6.6" fill="#2fd5f8" fill-opacity="0.85"/><circle cx="446.5" cy="2356" r="6.6" fill="#6c8cfa" fill-opacity="0.69"/><circle cx="452.9" cy="2356" r="6.6" fill="#6c8cfa" fill-opacity="0.70"/><circle cx="470.8" cy="2356" r="6.6" fill="#6c8cfa" fill-opacity="0.77"/><circle cx="483.9" cy="2356" r="6.6" fill="#6c8cfa" fill-opacity="0.69"/><circle cx="490.3" cy="2356" r="6.6" fill="#6c8cfa" fill-opacity="0.71"/><circle cx="512.8" cy="2356" r="6.6" fill="#2fd5f8" fill-opacity="0.85"/><circle cx="521.4" cy="2356" r="6.6" fill="#6c8cfa" fill-opacity="0.74"/><circle cx="536.4" cy="2356" r="6.6" fill="#6c8cfa" fill-opacity="0.78"/><circle cx="545.7" cy="2356" r="6.6" fill="#58c995" fill-opacity="0.90"/><circle cx="557.0" cy="2356" r="6.6" fill="#2fd5f8" fill-opacity="0.85"/><circle cx="566.3" cy="2356" r="6.6" fill="#6c8cfa" fill-opacity="0.68"/><circle cx="573.8" cy="2356" r="6.6" fill="#6c8cfa" fill-opacity="0.72"/><circle cx="588.8" cy="2356" r="6.6" fill="#6c8cfa" fill-opacity="0.69"/><circle cx="600.0" cy="2356" r="6.6" fill="#6c8cfa" fill-opacity="0.67"/><circle cx="613.1" cy="2356" r="6.6" fill="#6c8cfa" fill-opacity="0.69"/><circle cx="633.7" cy="2356" r="6.6" fill="#6c8cfa" fill-opacity="0.67"/><circle cx="648.7" cy="2356" r="6.6" fill="#6c8cfa" fill-opacity="0.73"/><circle cx="656.2" cy="2356" r="6.6" fill="#6c8cfa" fill-opacity="0.68"/><circle cx="669.3" cy="2356" r="6.6" fill="#6c8cfa" fill-opacity="0.73"/><circle cx="676.8" cy="2356" r="6.6" fill="#6c8cfa" fill-opacity="0.67"/><circle cx="684.2" cy="2356" r="6.6" fill="#6c8cfa" fill-opacity="0.67"/><circle cx="691.7" cy="2356" r="6.6" fill="#6c8cfa" fill-opacity="0.77"/><circle cx="710.5" cy="2356" r="6.6" fill="#6c8cfa" fill-opacity="0.76"/><circle cx="727.3" cy="2356" r="6.6" fill="#6c8cfa" fill-opacity="0.75"/><circle cx="739.7" cy="2356" r="6.6" fill="#6c8cfa" fill-opacity="0.66"/><circle cx="759.1" cy="2356" r="6.6" fill="#6c8cfa" fill-opacity="0.73"/><circle cx="766.6" cy="2356" r="6.6" fill="#6c8cfa" fill-opacity="0.70"/><circle cx="777.8" cy="2356" r="6.6" fill="#6c8cfa" fill-opacity="0.74"/><circle cx="789.1" cy="2356" r="6.6" fill="#6c8cfa" fill-opacity="0.72"/><circle cx="798.4" cy="2356" r="6.6" fill="#6c8cfa" fill-opacity="0.73"/><circle cx="802.2" cy="2356" r="6.6" fill="#6c8cfa" fill-opacity="0.74"/><circle cx="817.2" cy="2356" r="6.6" fill="#6c8cfa" fill-opacity="0.71"/><circle cx="841.5" cy="2356" r="6.6" fill="#2fd5f8" fill-opacity="0.85"/><circle cx="856.5" cy="2356" r="6.6" fill="#2fd5f8" fill-opacity="0.85"/><circle cx="862.1" cy="2356" r="6.6" fill="#2fd5f8" fill-opacity="0.85"/><circle cx="873.3" cy="2356" r="6.6" fill="#6c8cfa" fill-opacity="0.71"/><circle cx="881.2" cy="2356" r="6.6" fill="#6c8cfa" fill-opacity="0.67"/><circle cx="890.6" cy="2356" r="6.6" fill="#58c995" fill-opacity="0.90"/><circle cx="903.7" cy="2356" r="6.6" fill="#2fd5f8" fill-opacity="0.85"/><circle cx="911.2" cy="2356" r="6.6" fill="#6c8cfa" fill-opacity="0.70"/><circle cx="924.3" cy="2356" r="6.6" fill="#6c8cfa" fill-opacity="0.67"/><circle cx="935.5" cy="2356" r="6.6" fill="#6c8cfa" fill-opacity="0.68"/><circle cx="943.0" cy="2356" r="6.6" fill="#6c8cfa" fill-opacity="0.66"/><circle cx="959.9" cy="2356" r="6.6" fill="#6c8cfa" fill-opacity="0.70"/><circle cx="973.0" cy="2356" r="6.6" fill="#6c8cfa" fill-opacity="0.76"/><circle cx="978.6" cy="2356" r="6.6" fill="#2fd5f8" fill-opacity="0.85"/><circle cx="987.9" cy="2356" r="6.6" fill="#2fd5f8" fill-opacity="0.85"/><circle cx="1001.8" cy="2356" r="6.6" fill="#6c8cfa" fill-opacity="0.68"/><circle cx="1013.0" cy="2356" r="6.6" fill="#6c8cfa" fill-opacity="0.66"/><circle cx="1021.6" cy="2356" r="6.6" fill="#6c8cfa" fill-opacity="0.67"/><circle cx="1049.7" cy="2356" r="6.6" fill="#6c8cfa" fill-opacity="0.71"/><circle cx="1055.3" cy="2356" r="6.6" fill="#6c8cfa" fill-opacity="0.69"/><circle cx="1068.4" cy="2356" r="6.6" fill="#6c8cfa" fill-opacity="0.75"/><circle cx="1079.7" cy="2356" r="6.6" fill="#6c8cfa" fill-opacity="0.68"/><circle cx="1085.3" cy="2356" r="6.6" fill="#6c8cfa" fill-opacity="0.71"/><circle cx="1098.4" cy="2356" r="6.6" fill="#6c8cfa" fill-opacity="0.75"/><circle cx="1107.7" cy="2356" r="6.6" fill="#2fd5f8" fill-opacity="0.85"/><circle cx="1124.6" cy="2356" r="6.6" fill="#2fd5f8" fill-opacity="0.85"/><circle cx="1133.9" cy="2356" r="6.6" fill="#6c8cfa" fill-opacity="0.77"/><circle cx="1143.3" cy="2356" r="6.6" fill="#6c8cfa" fill-opacity="0.68"/><circle cx="1154.5" cy="2356" r="6.6" fill="#6c8cfa" fill-opacity="0.66"/><circle cx="1163.9" cy="2356" r="6.6" fill="#6c8cfa" fill-opacity="0.77"/><circle cx="1178.9" cy="2356" r="6.6" fill="#6c8cfa" fill-opacity="0.68"/><circle cx="1205.1" cy="2356" r="6.6" fill="#6c8cfa" fill-opacity="0.73"/><circle cx="1212.6" cy="2356" r="6.6" fill="#6c8cfa" fill-opacity="0.76"/><circle cx="1230.2" cy="2356" r="6.6" fill="#6c8cfa" fill-opacity="0.74"/><circle cx="1251.9" cy="2356" r="6.6" fill="#6c8cfa" fill-opacity="0.69"/><circle cx="1257.5" cy="2356" r="6.6" fill="#2fd5f8" fill-opacity="0.85"/><circle cx="1272.5" cy="2356" r="6.6" fill="#6c8cfa" fill-opacity="0.68"/><circle cx="1280.0" cy="2356" r="6.6" fill="#6c8cfa" fill-opacity="0.77"/><circle cx="1287.4" cy="2356" r="6.6" fill="#6c8cfa" fill-opacity="0.71"/><circle cx="1294.9" cy="2356" r="6.6" fill="#6c8cfa" fill-opacity="0.77"/><circle cx="1300.6" cy="2356" r="6.6" fill="#6c8cfa" fill-opacity="0.69"/><circle cx="1309.9" cy="2356" r="6.6" fill="#6c8cfa" fill-opacity="0.74"/><circle cx="1324.9" cy="2356" r="6.6" fill="#6c8cfa" fill-opacity="0.67"/><circle cx="1334.2" cy="2356" r="6.6" fill="#6c8cfa" fill-opacity="0.66"/><circle cx="1341.7" cy="2356" r="6.6" fill="#6c8cfa" fill-opacity="0.72"/><circle cx="1364.2" cy="2356" r="6.6" fill="#6c8cfa" fill-opacity="0.66"/><circle cx="1373.6" cy="2356" r="6.6" fill="#6c8cfa" fill-opacity="0.74"/><circle cx="1390.4" cy="2356" r="6.6" fill="#2fd5f8" fill-opacity="0.85"/><circle cx="1405.4" cy="2356" r="6.6" fill="#d88cf5" fill-opacity="0.90"/><circle cx="1433.5" cy="2356" r="6.6" fill="#6c8cfa" fill-opacity="0.77"/><circle cx="1454.1" cy="2356" r="6.6" fill="#6c8cfa" fill-opacity="0.71"/><circle cx="1472.8" cy="2356" r="6.6" fill="#6c8cfa" fill-opacity="0.78"/><circle cx="1497.1" cy="2356" r="6.6" fill="#6c8cfa" fill-opacity="0.76"/><circle cx="1527.5" cy="2356" r="6.6" fill="#2fd5f8" fill-opacity="0.85"/><circle cx="1534.2" cy="2356" r="6.6" fill="#6c8cfa" fill-opacity="0.73"/><circle cx="1544.3" cy="2356" r="6.6" fill="#2fd5f8" fill-opacity="0.85"/><circle cx="1550.0" cy="2356" r="6.6" fill="#6c8cfa" fill-opacity="0.71"/><circle cx="1555.6" cy="2356" r="6.6" fill="#6c8cfa" fill-opacity="0.76"/><circle cx="1570.5" cy="2356" r="6.6" fill="#6c8cfa" fill-opacity="0.77"/><circle cx="1586.6" cy="2356" r="6.6" fill="#2fd5f8" fill-opacity="0.85"/><circle cx="1613.6" cy="2356" r="6.6" fill="#6c8cfa" fill-opacity="0.68"/><circle cx="1621.1" cy="2356" r="6.6" fill="#6c8cfa" fill-opacity="0.74"/><circle cx="1626.7" cy="2356" r="6.6" fill="#6c8cfa" fill-opacity="0.66"/><circle cx="1634.2" cy="2356" r="6.6" fill="#6c8cfa" fill-opacity="0.67"/><circle cx="1641.7" cy="2356" r="6.6" fill="#6c8cfa" fill-opacity="0.73"/><circle cx="1647.3" cy="2356" r="6.6" fill="#6c8cfa" fill-opacity="0.72"/><circle cx="1667.9" cy="2356" r="6.6" fill="#2fd5f8" fill-opacity="0.85"/><circle cx="1679.1" cy="2356" r="6.6" fill="#6c8cfa" fill-opacity="0.72"/><circle cx="1697.1" cy="2356" r="6.6" fill="#6c8cfa" fill-opacity="0.70"/><circle cx="1714.7" cy="2356" r="6.6" fill="#6c8cfa" fill-opacity="0.71"/><circle cx="1722.2" cy="2356" r="6.6" fill="#6c8cfa" fill-opacity="0.71"/><circle cx="1734.2" cy="2356" r="6.6" fill="#6c8cfa" fill-opacity="0.71"/><circle cx="1740.9" cy="2356" r="6.6" fill="#2fd5f8" fill-opacity="0.85"/><circle cx="1784.7" cy="2356" r="6.6" fill="#6c8cfa" fill-opacity="0.67"/><circle cx="1807.5" cy="2356" r="6.6" fill="#6c8cfa" fill-opacity="0.72"/><circle cx="1821.4" cy="2356" r="6.6" fill="#6c8cfa" fill-opacity="0.73"/><circle cx="1858.8" cy="2356" r="6.6" fill="#6c8cfa" fill-opacity="0.69"/><circle cx="1878.7" cy="2356" r="6.6" fill="#6c8cfa" fill-opacity="0.75"/><circle cx="1890.6" cy="2356" r="6.6" fill="#2fd5f8" fill-opacity="0.85"/><circle cx="1898.1" cy="2356" r="6.6" fill="#6c8cfa" fill-opacity="0.74"/><circle cx="1903.8" cy="2356" r="6.6" fill="#2fd5f8" fill-opacity="0.85"/><circle cx="1916.1" cy="2356" r="6.6" fill="#6c8cfa" fill-opacity="0.66"/><circle cx="1948.7" cy="2356" r="6.6" fill="#6c8cfa" fill-opacity="0.72"/><circle cx="1995.5" cy="2356" r="6.6" fill="#6c8cfa" fill-opacity="0.71"/><circle cx="2001.1" cy="2356" r="6.6" fill="#6c8cfa" fill-opacity="0.78"/><circle cx="2032.2" cy="2356" r="6.6" fill="#6c8cfa" fill-opacity="0.73"/><circle cx="2038.5" cy="2356" r="6.6" fill="#6c8cfa" fill-opacity="0.71"/><circle cx="2047.9" cy="2356" r="6.6" fill="#6c8cfa" fill-opacity="0.78"/><circle cx="2055.4" cy="2356" r="6.6" fill="#6c8cfa" fill-opacity="0.71"/><circle cx="2088.3" cy="2356" r="6.6" fill="#6c8cfa" fill-opacity="0.70"/><circle cx="2098.4" cy="2356" r="6.6" fill="#6c8cfa" fill-opacity="0.77"/><circle cx="2137.7" cy="2356" r="6.6" fill="#6c8cfa" fill-opacity="0.70"/><circle cx="2149.0" cy="2356" r="6.6" fill="#6c8cfa" fill-opacity="0.72"/><circle cx="2159.5" cy="2356" r="6.6" fill="#6c8cfa" fill-opacity="0.70"/><circle cx="2224.3" cy="2356" r="6.6" fill="#2fd5f8" fill-opacity="0.85"/><circle cx="2236.6" cy="2356" r="6.6" fill="#6c8cfa" fill-opacity="0.74"/><circle cx="2244.9" cy="2356" r="6.6" fill="#2fd5f8" fill-opacity="0.85"/><circle cx="2260.6" cy="2356" r="6.6" fill="#2fd5f8" fill-opacity="0.85"/><circle cx="2274.1" cy="2356" r="6.6" fill="#2fd5f8" fill-opacity="0.85"/><circle cx="2290.9" cy="2356" r="6.6" fill="#6c8cfa" fill-opacity="0.70"/><circle cx="2319.0" cy="2356" r="6.6" fill="#6c8cfa" fill-opacity="0.69"/><circle cx="2330.2" cy="2356" r="6.6" fill="#6c8cfa" fill-opacity="0.78"/><circle cx="2344.1" cy="2356" r="6.6" fill="#6c8cfa" fill-opacity="0.77"/><circle cx="2353.5" cy="2356" r="6.6" fill="#6c8cfa" fill-opacity="0.70"/><circle cx="2364.7" cy="2356" r="6.6" fill="#6c8cfa" fill-opacity="0.66"/><circle cx="2368.4" cy="2356" r="6.6" fill="#6c8cfa" fill-opacity="0.75"/><circle cx="2382.7" cy="2356" r="6.6" fill="#6c8cfa" fill-opacity="0.73"/><circle cx="2393.9" cy="2356" r="6.6" fill="#6c8cfa" fill-opacity="0.71"/><circle cx="2401.4" cy="2356" r="6.6" fill="#6c8cfa" fill-opacity="0.74"/><circle cx="2445.2" cy="2356" r="6.6" fill="#6c8cfa" fill-opacity="0.74"/><circle cx="2450.8" cy="2356" r="6.6" fill="#6c8cfa" fill-opacity="0.74"/><circle cx="2462.0" cy="2356" r="6.6" fill="#6c8cfa" fill-opacity="0.74"/><circle cx="2469.5" cy="2356" r="6.6" fill="#2fd5f8" fill-opacity="0.85"/><circle cx="2475.1" cy="2356" r="6.6" fill="#6c8cfa" fill-opacity="0.71"/><circle cx="2503.2" cy="2356" r="6.6" fill="#6c8cfa" fill-opacity="0.74"/><circle cx="2516.3" cy="2356" r="6.6" fill="#6c8cfa" fill-opacity="0.73"/><circle cx="2538.8" cy="2356" r="6.6" fill="#6c8cfa" fill-opacity="0.69"/><circle cx="2596.1" cy="2356" r="6.6" fill="#6c8cfa" fill-opacity="0.78"/><circle cx="2617.4" cy="2356" r="6.6" fill="#6c8cfa" fill-opacity="0.71"/><circle cx="2639.9" cy="2356" r="6.6" fill="#6c8cfa" fill-opacity="0.69"/><circle cx="2643.6" cy="2356" r="6.6" fill="#2fd5f8" fill-opacity="0.85"/><circle cx="2653.0" cy="2356" r="6.6" fill="#6c8cfa" fill-opacity="0.74"/><circle cx="2658.6" cy="2356" r="6.6" fill="#6c8cfa" fill-opacity="0.75"/><circle cx="2666.1" cy="2356" r="6.6" fill="#2fd5f8" fill-opacity="0.85"/><circle cx="2675.4" cy="2356" r="6.6" fill="#2fd5f8" fill-opacity="0.85"/></svg>
<div class="t" style="left:112px;width:100px;text-align:right;top:1845.1px;font-size:25px;line-height:25px;color:#6e7079;">50</div>
<svg class="b" style="left:149.4px;top:1843.0px;" width="28" height="28" viewBox="0 0 32 32"><use href="#eth"/></svg>
<div class="t" style="left:112px;width:100px;text-align:right;top:1944.9px;font-size:25px;line-height:25px;color:#6e7079;">40</div>
<svg class="b" style="left:149.4px;top:1942.8px;" width="28" height="28" viewBox="0 0 32 32"><use href="#eth"/></svg>
<div class="t" style="left:112px;width:100px;text-align:right;top:2044.7px;font-size:25px;line-height:25px;color:#6e7079;">30</div>
<svg class="b" style="left:149.4px;top:2042.6px;" width="28" height="28" viewBox="0 0 32 32"><use href="#eth"/></svg>
<div class="t" style="left:112px;width:100px;text-align:right;top:2144.5px;font-size:25px;line-height:25px;color:#6e7079;">20</div>
<svg class="b" style="left:149.4px;top:2142.4px;" width="28" height="28" viewBox="0 0 32 32"><use href="#eth"/></svg>
<div class="t" style="left:112px;width:100px;text-align:right;top:2244.3px;font-size:25px;line-height:25px;color:#6e7079;">10</div>
<svg class="b" style="left:149.4px;top:2242.2px;" width="28" height="28" viewBox="0 0 32 32"><use href="#eth"/></svg>
<div class="t" style="left:112px;width:100px;text-align:right;top:2344.1px;font-size:25px;line-height:25px;color:#6e7079;">0</div>
<svg class="b" style="left:161.1px;top:2342.0px;" width="28" height="28" viewBox="0 0 32 32"><use href="#eth"/></svg>
<div class="t" style="left:323.5px;width:60px;text-align:center;top:2374.3px;font-size:25px;line-height:25px;font-weight:400;color:#6e7079;">3</div>
<div class="t" style="left:673.5px;width:60px;text-align:center;top:2374.3px;font-size:25px;line-height:25px;font-weight:400;color:#6e7079;">4</div>
<div class="t" style="left:1023.5px;width:60px;text-align:center;top:2374.3px;font-size:25px;line-height:25px;font-weight:400;color:#6e7079;">5</div>
<div class="t" style="left:1373.5px;width:60px;text-align:center;top:2374.3px;font-size:25px;line-height:25px;font-weight:400;color:#6e7079;">6</div>
<div class="t" style="left:1723.5px;width:60px;text-align:center;top:2374.3px;font-size:25px;line-height:25px;font-weight:400;color:#6e7079;">7</div>
<div class="t" style="left:2073.5px;width:60px;text-align:center;top:2374.3px;font-size:25px;line-height:25px;font-weight:400;color:#6e7079;">8</div>
<div class="t" style="left:2423.5px;width:60px;text-align:center;top:2374.3px;font-size:25px;line-height:25px;font-weight:400;color:#6e7079;">9</div>
<div class="b" style="left:60.0px;top:2459.5px;width:2740.0px;height:864.0px;background:#fff;border-radius:16px;box-shadow:0 1px 4px rgba(16,24,40,0.08);"></div>
<div class="b" style="left:2289.0px;top:2494.5px;width:478.0px;height:66.5px;background:#fff;border-radius:12px;box-shadow:inset 0 0 0 2px #e3e5e9;"></div>
<div class="t" style="left:2277.5px;width:100px;text-align:center;top:2515.2px;font-size:26px;line-height:26px;font-weight:400;color:#6b7280;">1d</div>
<div class="t" style="left:2355.0px;width:100px;text-align:center;top:2515.2px;font-size:26px;line-height:26px;font-weight:400;color:#6b7280;">7d</div>
<div class="b" style="left:2445.0px;top:2496.5px;width:81.0px;height:62.5px;background:#f3f4f6;border-radius:0px;"></div>
<div class="t" style="left:2435.5px;width:100px;text-align:center;top:2515.2px;font-size:26px;line-height:26px;font-weight:700;color:#1e2024;">1m</div>
<div class="t" style="left:2520.0px;width:100px;text-align:center;top:2515.2px;font-size:26px;line-height:26px;font-weight:400;color:#6b7280;">3m</div>
<div class="t" style="left:2600.5px;width:100px;text-align:center;top:2515.2px;font-size:26px;line-height:26px;font-weight:400;color:#6b7280;">1y</div>
<div class="t" style="left:2677.5px;width:100px;text-align:center;top:2515.2px;font-size:26px;line-height:26px;font-weight:400;color:#6b7280;">All</div>
<div class="b" style="left:2365.0px;top:2495.5px;width:2.0px;height:64.5px;background:#e3e5e9;border-radius:0px;"></div>
<div class="b" style="left:2443.0px;top:2495.5px;width:2.0px;height:64.5px;background:#e3e5e9;border-radius:0px;"></div>
<div class="b" style="left:2526.0px;top:2495.5px;width:2.0px;height:64.5px;background:#e3e5e9;border-radius:0px;"></div>
<div class="b" style="left:2612.0px;top:2495.5px;width:2.0px;height:64.5px;background:#e3e5e9;border-radius:0px;"></div>
<div class="b" style="left:2687.0px;top:2495.5px;width:2.0px;height:64.5px;background:#e3e5e9;border-radius:0px;"></div>
<div class="b" style="left:92.4px;top:2588.5px;width:217.6px;height:118.9px;background:#f4f5f7;border-radius:12px;"></div>
<svg class="b" style="left:108.4px;top:2618.0px;" width="16" height="16" viewBox="0 0 16 16"><circle cx="8" cy="8" r="8" fill="#3f74f6"/></svg>
<div class="t" id="t61" style="left:141.8px;top:2612.3px;font-size:28px;line-height:28px;font-weight:400;color:#6b7280;transform:scaleX(1.0207);transform-origin:0 0;">Volume(1m)</div>
<svg class="b" style="left:140.0px;top:2656.0px;" width="28" height="28" viewBox="0 0 32 32"><use href="#eth"/></svg>
<div class="t" id="t62" style="left:171.0px;top:2656.3px;font-size:28px;line-height:28px;font-weight:700;color:#1e2024;transform:scaleX(0.9944);transform-origin:0 0;">19.81K</div>
<div class="b" style="left:343.0px;top:2588.5px;width:192.5px;height:118.9px;background:#f4f5f7;border-radius:12px;"></div>
<svg class="b" style="left:359.0px;top:2618.0px;" width="16" height="16" viewBox="0 0 16 16"><circle cx="8" cy="8" r="8" fill="#d3d7df"/></svg>
<div class="t" id="t63" style="left:391.0px;top:2612.3px;font-size:28px;line-height:28px;font-weight:400;color:#6b7280;transform:scaleX(1.0128);transform-origin:0 0;">Sales(1m)</div>
<div class="t" id="t64" style="left:392.0px;top:2656.3px;font-size:28px;line-height:28px;font-weight:700;color:#1e2024;transform:scaleX(1.0667);transform-origin:0 0;">2.69K</div>
<svg class="b" style="left:0.0px;top:2400.0px;" width="2858" height="1000" viewBox="0 2400 2858 1000"><line x1="222" y1="2765" x2="2728" y2="2765" stroke="#eef0f4" stroke-width="2"/><line x1="222" y1="2846.3" x2="2728" y2="2846.3" stroke="#eef0f4" stroke-width="2"/><line x1="222" y1="2927.7" x2="2728" y2="2927.7" stroke="#eef0f4" stroke-width="2"/><line x1="222" y1="3009" x2="2728" y2="3009" stroke="#eef0f4" stroke-width="2"/><line x1="222" y1="3090.3" x2="2728" y2="3090.3" stroke="#eef0f4" stroke-width="2"/><line x1="222" y1="3171.7" x2="2728" y2="3171.7" stroke="#eef0f4" stroke-width="2"/><line x1="222" y1="3253" x2="2728" y2="3253" stroke="#eef0f4" stroke-width="2"/><use href="#wm" x="2348" y="2706"/><rect x="221.7" y="3026.8" width="16" height="225.2" fill="#d3d8e1"/><rect x="304.7" y="3099.8" width="16" height="152.2" fill="#d3d8e1"/><rect x="387.7" y="2994" width="16" height="258.0" fill="#d3d8e1"/><rect x="470.7" y="2983.2" width="16" height="268.8" fill="#d3d8e1"/><rect x="553.7" y="2988.6" width="16" height="263.4" fill="#d3d8e1"/><rect x="636.7" y="3010.4" width="16" height="241.6" fill="#d3d8e1"/><rect x="719.7" y="2915.6" width="16" height="336.4" fill="#d3d8e1"/><rect x="802.7" y="2872" width="16" height="380.0" fill="#d3d8e1"/><rect x="885.7" y="2945.5" width="16" height="306.5" fill="#d3d8e1"/><rect x="968.7" y="3037.6" width="16" height="214.4" fill="#d3d8e1"/><rect x="1051.7" y="3064.9" width="16" height="187.1" fill="#d3d8e1"/><rect x="1134.7" y="2945.5" width="16" height="306.5" fill="#d3d8e1"/><rect x="1217.7" y="3005" width="16" height="247.0" fill="#d3d8e1"/><rect x="1300.7" y="3037.6" width="16" height="214.4" fill="#d3d8e1"/><rect x="1383.7" y="3129.8" width="16" height="122.2" fill="#d3d8e1"/><rect x="1466.7" y="2907.4" width="16" height="344.6" fill="#d3d8e1"/><rect x="1549.7" y="3099.8" width="16" height="152.2" fill="#d3d8e1"/><rect x="1632.7" y="3029.5" width="16" height="222.5" fill="#d3d8e1"/><rect x="1715.7" y="3029.5" width="16" height="222.5" fill="#d3d8e1"/><rect x="1798.7" y="2867" width="16" height="385.0" fill="#d3d8e1"/><rect x="1881.7" y="2972.8" width="16" height="279.2" fill="#d3d8e1"/><rect x="1964.7" y="2956.4" width="16" height="295.6" fill="#d3d8e1"/><rect x="2047.7" y="2988.7" width="16" height="263.3" fill="#d3d8e1"/><rect x="2130.7" y="3099.8" width="16" height="152.2" fill="#d3d8e1"/><rect x="2213.7" y="3056.9" width="16" height="195.1" fill="#d3d8e1"/><rect x="2296.7" y="2958.8" width="16" height="293.2" fill="#d3d8e1"/><rect x="2379.7" y="2967" width="16" height="285.0" fill="#d3d8e1"/><rect x="2462.7" y="3089" width="16" height="163.0" fill="#d3d8e1"/><rect x="2545.7" y="3148.4" width="16" height="103.6" fill="#d3d8e1"/><rect x="2628.7" y="3151.4" width="16" height="100.6" fill="#d3d8e1"/><rect x="2711.7" y="3140.7" width="16" height="111.3" fill="#d3d8e1"/><polyline points="229.7,3062 312.7,3124.8 395.7,3124.8 478.7,3124.8 561.7,3121.6 644.7,3121.6 727.7,2988.6 810.7,2854.8 893.7,2902 976.7,2969.1 1059.7,3121.2 1142.7,3023.6 1225.7,3040 1308.7,3118 1391.7,3096.2 1474.7,3118 1557.7,3107 1640.7,3096.2 1723.7,3039 1806.7,3038 1889.7,3051.7 1972.7,3018 2055.7,3107.5 2138.7,3118 2221.7,3069.9 2304.7,3183 2387.7,3149.3 2470.7,3012.7 2553.7,3149.3 2636.7,3183.7 2719.7,3194.4" fill="none" stroke="#3e74f6" stroke-width="4" stroke-linejoin="round"/></svg>
<div class="t" style="left:100px;width:106px;text-align:right;top:2753.1px;font-size:25px;line-height:25px;color:#6e7079;">1.8K</div>
<svg class="b" style="left:121.0px;top:2751.0px;" width="28" height="28" viewBox="0 0 32 32"><use href="#eth"/></svg>
<div class="t" style="left:100px;width:106px;text-align:right;top:2834.4px;font-size:25px;line-height:25px;color:#6e7079;">1.5K</div>
<svg class="b" style="left:121.0px;top:2832.3px;" width="28" height="28" viewBox="0 0 32 32"><use href="#eth"/></svg>
<div class="t" style="left:100px;width:106px;text-align:right;top:2915.8px;font-size:25px;line-height:25px;color:#6e7079;">1.2K</div>
<svg class="b" style="left:121.0px;top:2913.7px;" width="28" height="28" viewBox="0 0 32 32"><use href="#eth"/></svg>
<div class="t" style="left:100px;width:106px;text-align:right;top:2997.1px;font-size:25px;line-height:25px;color:#6e7079;">900</div>
<svg class="b" style="left:128.8px;top:2995.0px;" width="28" height="28" viewBox="0 0 32 32"><use href="#eth"/></svg>
<div class="t" style="left:100px;width:106px;text-align:right;top:3078.4px;font-size:25px;line-height:25px;color:#6e7079;">600</div>
<svg class="b" style="left:128.8px;top:3076.3px;" width="28" height="28" viewBox="0 0 32 32"><use href="#eth"/></svg>
<div class="t" style="left:100px;width:106px;text-align:right;top:3159.8px;font-size:25px;line-height:25px;color:#6e7079;">300</div>
<svg class="b" style="left:128.8px;top:3157.7px;" width="28" height="28" viewBox="0 0 32 32"><use href="#eth"/></svg>
<div class="t" style="left:100px;width:106px;text-align:right;top:3241.1px;font-size:25px;line-height:25px;color:#6e7079;">0</div>
<svg class="b" style="left:156.6px;top:3239.0px;" width="28" height="28" viewBox="0 0 32 32"><use href="#eth"/></svg>
<div class="t" style="left:438.5px;width:80px;text-align:center;top:3269.3px;font-size:25px;line-height:25px;font-weight:400;color:#6e7079;">13</div>
<div class="t" style="left:770.7px;width:80px;text-align:center;top:3269.3px;font-size:25px;line-height:25px;font-weight:400;color:#6e7079;">17</div>
<div class="t" style="left:1101.8px;width:80px;text-align:center;top:3269.3px;font-size:25px;line-height:25px;font-weight:400;color:#6e7079;">21</div>
<div class="t" style="left:1433.5px;width:80px;text-align:center;top:3269.3px;font-size:25px;line-height:25px;font-weight:400;color:#6e7079;">25</div>
<div class="t" style="left:1766.0px;width:80px;text-align:center;top:3269.3px;font-size:25px;line-height:25px;font-weight:400;color:#6e7079;">29</div>
<div class="t" style="left:2015.5px;width:80px;text-align:center;top:3269.3px;font-size:25px;line-height:25px;font-weight:700;color:#6e7079;">Nov</div>
<div class="t" style="left:2348.5px;width:80px;text-align:center;top:3269.3px;font-size:25px;line-height:25px;font-weight:400;color:#6e7079;">5</div>
<div class="t" style="left:2680.5px;width:80px;text-align:center;top:3269.3px;font-size:25px;line-height:25px;font-weight:400;color:#6e7079;">9</div>
<div class="b" style="left:60.0px;top:3356.0px;width:2740.0px;height:244.0px;background:#fff;border-radius:16px;box-shadow:0 1px 4px rgba(16,24,40,0.08);"></div>
<div class="b" style="left:2289.0px;top:3390.5px;width:478.0px;height:69.5px;background:#fff;border-radius:12px;box-shadow:inset 0 0 0 2px #e3e5e9;"></div>
<div class="b" style="left:2444.0px;top:3392.5px;width:83.0px;height:67.5px;background:#f3f4f6;border-radius:0px;"></div>
<div class="b" style="left:2365.0px;top:3391.5px;width:2.0px;height:68.5px;background:#e3e5e9;border-radius:0px;"></div>
<div class="b" style="left:2443.0px;top:3391.5px;width:2.0px;height:68.5px;background:#e3e5e9;border-radius:0px;"></div>
<div class="b" style="left:2526.0px;top:3391.5px;width:2.0px;height:68.5px;background:#e3e5e9;border-radius:0px;"></div>
<div class="b" style="left:2612.0px;top:3391.5px;width:2.0px;height:68.5px;background:#e3e5e9;border-radius:0px;"></div>
<div class="b" style="left:2687.0px;top:3391.5px;width:2.0px;height:68.5px;background:#e3e5e9;border-radius:0px;"></div>
<div class="b" style="left:40.0px;top:2439.0px;width:312.0px;height:147.5px;background:#f44a4a;border-radius:40px;"></div>
<div class="b" style="left:62.0px;top:2461.0px;width:268.0px;height:104.0px;background:#fff;border-radius:12px;"></div>
<div class="t" id="t65" style="left:93.8px;top:2510.7px;font-size:33px;line-height:33px;font-weight:700;color:#1e2024;transform:scaleX(0.9971);transform-origin:0 0;">Trending</div>
</body></html>
